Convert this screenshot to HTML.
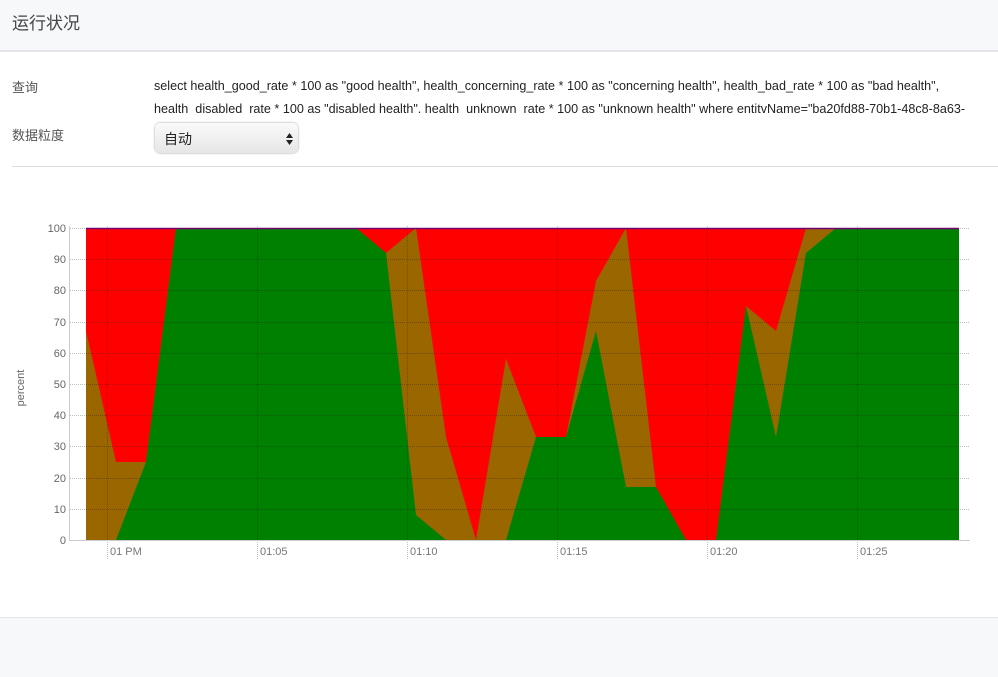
<!DOCTYPE html>
<html><head><meta charset="utf-8"><style>
body{margin:0;width:998px;height:676px;background:#fff;font-family:"Liberation Sans","Noto Sans CJK SC",sans-serif;position:relative;overflow:hidden}
.hdr{position:absolute;left:0;top:0;width:998px;height:50px;background:#f7f8fa;border-bottom:2px solid #e3e5e8}
.hdr span{position:absolute;left:12px;top:9px;font-size:17px;color:#444}
.lab{position:absolute;left:12px;font-size:13px;color:#555}
.q{position:absolute;left:154px;top:75px;font-size:12.6px;color:#222;line-height:23px;width:840px;height:46px;overflow:hidden;white-space:nowrap}
.sel{position:absolute;left:155px;top:123px;width:143px;height:30px;border-radius:5px;background:linear-gradient(#fafafa,#e6e6e6);box-shadow:0 0 2px #999;font-size:14px;color:#222}
.sel span{position:absolute;left:9px;top:6px}
.hr{position:absolute;left:12px;top:166px;width:986px;height:1px;background:#ddd}
.ftr{position:absolute;left:0;top:617px;width:998px;height:59px;background:#f7f8fa;border-top:1px solid #e3e5e8}
</style></head><body>
<div class="hdr"><span>运行状况</span></div>
<div class="lab" style="top:77px">查询</div>
<div class="q">select health_good_rate * 100 as "good health", health_concerning_rate * 100 as "concerning health", health_bad_rate * 100 as "bad health",<br>health&nbsp; disabled&nbsp; rate * 100 as "disabled health". health&nbsp; unknown&nbsp; rate * 100 as "unknown health" where entitvName="ba20fd88-70b1-48c8-8a63-</div>
<div class="lab" style="top:125px">数据粒度</div>
<div class="sel"><span>自动</span><svg style="position:absolute;left:131px;top:10px" width="7" height="12"><path d="M0 5L3.5 0L7 5ZM0 7L3.5 12L7 7Z" fill="#222"/></svg></div>
<div class="hr"></div>
<svg style="position:absolute;left:0;top:0" width="998" height="676" font-family="Liberation Sans,sans-serif">
<rect x="86" y="228" width="873" height="312" fill="#ff0000"/>
<polygon fill="#996600" points="86,331 116,462 146,462 176,228 356,228 386,253 416,228 446,437 476,540 506,359 536,437 566,437 596,281 626,228 656,487 686,540 716,540 746,306 776,331 806,228 959,228 959,540 86,540"/>
<polygon fill="#008000" points="86,540 116,540 146,462 176,228 356,228 386,253 416,515 446,540 506,540 536,437 566,437 596,331 626,487 656,487 686,540 716,540 746,306 776,437 806,253 836,228 959,228 959,540"/>
<line x1="86" y1="228.5" x2="959" y2="228.5" stroke="#800080" stroke-width="1.5"/>
<g stroke="rgba(0,0,0,0.25)" stroke-dasharray="1,1" stroke-width="1">
<line x1="70" y1="228.5" x2="970" y2="228.5"/><line x1="70" y1="259.5" x2="970" y2="259.5"/><line x1="70" y1="290.5" x2="970" y2="290.5"/><line x1="70" y1="322.5" x2="970" y2="322.5"/><line x1="70" y1="353.5" x2="970" y2="353.5"/><line x1="70" y1="384.5" x2="970" y2="384.5"/><line x1="70" y1="415.5" x2="970" y2="415.5"/><line x1="70" y1="446.5" x2="970" y2="446.5"/><line x1="70" y1="478.5" x2="970" y2="478.5"/><line x1="70" y1="509.5" x2="970" y2="509.5"/>
<line x1="107.5" y1="226" x2="107.5" y2="560"/><line x1="257.5" y1="226" x2="257.5" y2="560"/><line x1="407.5" y1="226" x2="407.5" y2="560"/><line x1="557.5" y1="226" x2="557.5" y2="560"/><line x1="707.5" y1="226" x2="707.5" y2="560"/><line x1="857.5" y1="226" x2="857.5" y2="560"/>
</g>
<line x1="69.5" y1="226" x2="69.5" y2="541" stroke="#ccc"/>
<line x1="69" y1="540.5" x2="970" y2="540.5" stroke="#ccc"/>
<g font-size="11" fill="#666" text-anchor="end">
<text x="66" y="232">100</text><text x="66" y="263">90</text><text x="66" y="294">80</text><text x="66" y="326">70</text><text x="66" y="357">60</text><text x="66" y="388">50</text><text x="66" y="419">40</text><text x="66" y="450">30</text><text x="66" y="482">20</text><text x="66" y="513">10</text><text x="66" y="544">0</text>
</g>
<g font-size="11" fill="#777">
<text x="110" y="555">01 PM</text><text x="260" y="555">01:05</text><text x="410" y="555">01:10</text><text x="560" y="555">01:15</text><text x="710" y="555">01:20</text><text x="860" y="555">01:25</text>
</g>
<text transform="translate(24,388) rotate(-90)" text-anchor="middle" font-size="11" fill="#666">percent</text>
</svg>
<div class="ftr"></div>
</body></html>
